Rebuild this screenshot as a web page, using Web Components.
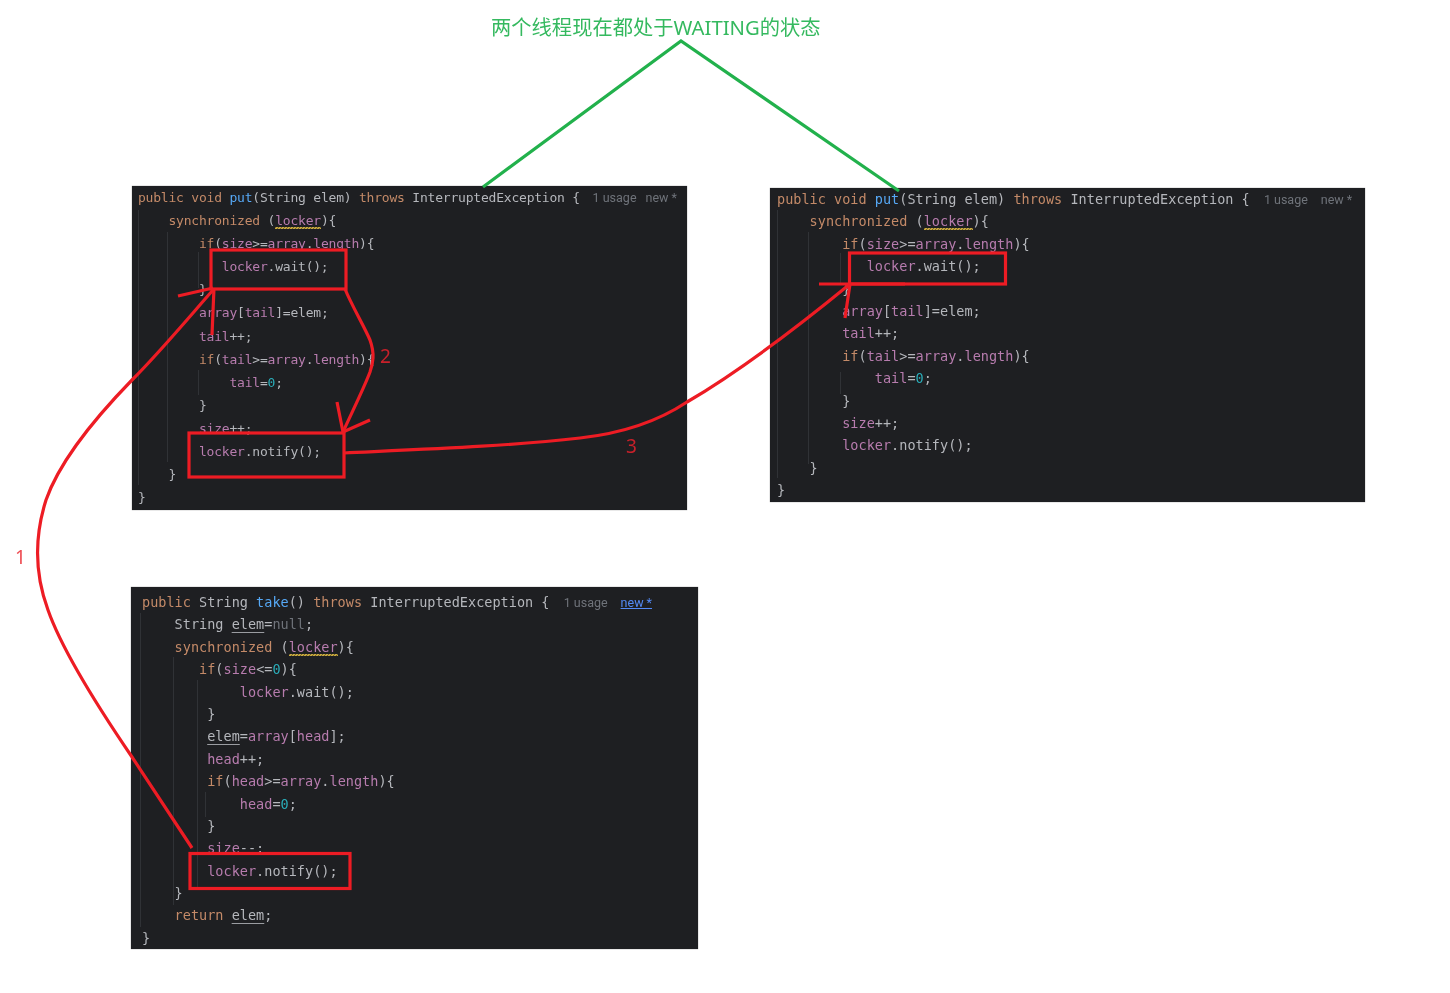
<!doctype html>
<html lang="zh">
<head>
<meta charset="utf-8">
<title>WAITING</title>
<style>
html,body{margin:0;padding:0;background:#fff}
</style>
</head>
<body>
<sketch-board>
  <note-title slot="title">两个线程现在都处于WAITING的状态</note-title>

  <code-panel slot="a" cw="7.62" lh="23.1" fs="13" pad="0 0 0 6" style="width:555px;height:324px"
    guides="6,24,299;35,46,276;66,66,102;66,184,209">
    <code-line><span class="k">public void</span> <span class="f">put</span>(String elem) <span class="k">throws</span> InterruptedException { <span class="h" style="margin-left:5px">1 usage</span><span class="h" style="margin-left:9px">new *</span></code-line>
    <code-line i="4"><span class="k">synchronized</span> (<span class="w">locker</span>){</code-line>
    <code-line i="8"><span class="k">if</span>(<span class="p">size</span>&gt;=<span class="p">array</span>.<span class="p">length</span>){</code-line>
    <code-line i="11"><span class="p">locker</span>.wait();</code-line>
    <code-line i="8">}</code-line>
    <code-line i="8"><span class="p">array</span>[<span class="p">tail</span>]=elem;</code-line>
    <code-line i="8"><span class="p">tail</span>++;</code-line>
    <code-line i="8"><span class="k">if</span>(<span class="p">tail</span>&gt;=<span class="p">array</span>.<span class="p">length</span>){</code-line>
    <code-line i="12"><span class="p">tail</span>=<span class="n">0</span>;</code-line>
    <code-line i="8">}</code-line>
    <code-line i="8"><span class="p">size</span>++;</code-line>
    <code-line i="8"><span class="p">locker</span>.notify();</code-line>
    <code-line i="4">}</code-line>
    <code-line>}</code-line>
  </code-panel>

  <code-panel slot="b" cw="8.15" lh="22.4" fs="13.5" pad="0 0 0 7" style="width:595px;height:314px"
    guides="7,22,290;38,44,276;70,65,95;70,184,206">
    <code-line><span class="k">public void</span> <span class="f">put</span>(String elem) <span class="k">throws</span> InterruptedException { <span class="h" style="margin-left:6px">1 usage</span><span class="h" style="margin-left:13px">new *</span></code-line>
    <code-line i="4"><span class="k">synchronized</span> (<span class="w">locker</span>){</code-line>
    <code-line i="8"><span class="k">if</span>(<span class="p">size</span>&gt;=<span class="p">array</span>.<span class="p">length</span>){</code-line>
    <code-line i="11"><span class="p">locker</span>.wait();</code-line>
    <code-line i="8">}</code-line>
    <code-line i="8"><span class="p">array</span>[<span class="p">tail</span>]=elem;</code-line>
    <code-line i="8"><span class="p">tail</span>++;</code-line>
    <code-line i="8"><span class="k">if</span>(<span class="p">tail</span>&gt;=<span class="p">array</span>.<span class="p">length</span>){</code-line>
    <code-line i="12"><span class="p">tail</span>=<span class="n">0</span>;</code-line>
    <code-line i="8">}</code-line>
    <code-line i="8"><span class="p">size</span>++;</code-line>
    <code-line i="8"><span class="p">locker</span>.notify();</code-line>
    <code-line i="4">}</code-line>
    <code-line>}</code-line>
  </code-panel>

  <code-panel slot="c" cw="8.15" lh="22.4" fs="13.5" pad="4 0 0 11" style="width:567px;height:362px"
    guides="9,26,340;42,70,318;66,93,300;74,205,230">
    <code-line><span class="k">public</span> String <span class="f">take</span>() <span class="k">throws</span> InterruptedException { <span class="h" style="margin-left:6px">1 usage</span><span class="h l" style="margin-left:13px">new *</span></code-line>
    <code-line i="4">String <span class="u">elem</span>=<span class="d">null</span>;</code-line>
    <code-line i="4"><span class="k">synchronized</span> (<span class="w">locker</span>){</code-line>
    <code-line i="7"><span class="k">if</span>(<span class="p">size</span>&lt;=<span class="n">0</span>){</code-line>
    <code-line i="12"><span class="p">locker</span>.wait();</code-line>
    <code-line i="8">}</code-line>
    <code-line i="8"><span class="u">elem</span>=<span class="p">array</span>[<span class="p">head</span>];</code-line>
    <code-line i="8"><span class="p">head</span>++;</code-line>
    <code-line i="8"><span class="k">if</span>(<span class="p">head</span>&gt;=<span class="p">array</span>.<span class="p">length</span>){</code-line>
    <code-line i="12"><span class="p">head</span>=<span class="n">0</span>;</code-line>
    <code-line i="8">}</code-line>
    <code-line i="8"><span class="p">size</span>--;</code-line>
    <code-line i="8"><span class="p">locker</span>.notify();</code-line>
    <code-line i="4">}</code-line>
    <code-line i="4"><span class="k">return</span> <span class="u">elem</span>;</code-line>
    <code-line>}</code-line>
  </code-panel>

  <ink-layer slot="ink"></ink-layer>
</sketch-board>

<script>
customElements.define("sketch-board", class extends HTMLElement {
    connectedCallback() {
        this.attachShadow({mode: "open"}).innerHTML = `<style>
            :host{display:block;position:relative;width:1450px;height:993px;overflow:hidden;background:#fff}
            .page{display:flex;flex-direction:column;padding-top:15px;box-sizing:border-box;height:100%}
            .top{padding-left:491px;height:171px}
            .row{display:flex;align-items:flex-start;padding-left:132px}
            .gap{width:83px;flex:none}
            .b{margin-top:2px}
            .low{margin-top:77px;padding-left:131px}
        </style>
        <div class="page">
            <div class="top"><slot name="title"></slot></div>
            <div class="row"><slot name="a"></slot><div class="gap"></div><div class="b"><slot name="b"></slot></div></div>
            <div class="row low"><slot name="c"></slot></div>
        </div>
        <slot name="ink"></slot>`;
    }
});

customElements.define("note-title", class extends HTMLElement {
    connectedCallback() {
        this.attachShadow({mode: "open"}).innerHTML = `<style>
            :host{display:block;font:20.3px/25px "Noto Sans","Noto Sans CJK SC",sans-serif;color:#35b95f;white-space:nowrap;filter:blur(.35px)}
        </style><slot></slot>`;
    }
});

customElements.define("code-panel", class extends HTMLElement {
    connectedCallback() {
        let cw = +this.getAttribute("cw"), fs = +this.getAttribute("fs");
        let pad = this.getAttribute("pad").split(" ").map(v => v + "px").join(" ");
        // indent guides are faint rules lying over the code block
        let guides = (this.getAttribute("guides") || "").split(";").map(g => {
            let [x, a, b] = g.split(",");
            return `<i style="left:${x}px;top:${a}px;height:${b - a}px"></i>`;
        }).join("");
        this.attachShadow({mode: "open"}).innerHTML = `<style>
            :host{display:block;flex:none;position:relative;box-sizing:border-box;background:#1e1f22;
                box-shadow:0 0 1px #77787a;
                --cw:${cw}px;--lh:${this.getAttribute("lh")}px;
                font:${fs}px "DejaVu Sans Mono","Liberation Mono",monospace;
                letter-spacing:${(cw - fs * 0.60205).toFixed(3)}px;color:#b5b7bc}
            .code{display:flex;flex-direction:column;padding:${pad}}
            i{position:absolute;width:1px;background:#303236}
        </style>${guides}<div class="code"><slot></slot></div>`;
    }
});

customElements.define("code-line", class extends HTMLElement {
    connectedCallback() {
        let n = ~~this.getAttribute("i");
        this.attachShadow({mode: "open"}).innerHTML = `<style>
            :host{display:block;height:var(--lh);line-height:var(--lh);white-space:pre;
                padding-left:calc(var(--cw) * ${n});filter:blur(.45px)}
            ::slotted(.k){color:#c48a68}
            ::slotted(.f){color:#56a8f5}
            ::slotted(.p){color:#b77cae}
            ::slotted(.n){color:#2aacb8}
            ::slotted(.d){color:#6f737a}
            ::slotted(.u){text-decoration:underline;text-decoration-color:#9a9ca1;text-underline-offset:3px}
            ::slotted(.w){color:#b77cae;padding-bottom:1px;
                background:linear-gradient(135deg,transparent 35%,#c9a83c 35% 65%,transparent 65%) 0 100%/3px 2px repeat-x,
                    linear-gradient(45deg,transparent 35%,#c9a83c 35% 65%,transparent 65%) 1.5px 100%/3px 2px repeat-x}
            ::slotted(.h){font:12.5px Roboto,"Liberation Sans",sans-serif;letter-spacing:0;color:#6f737a;display:inline-block}
            ::slotted(.l){color:#548af7;text-decoration:underline}
        </style><slot></slot>`;
    }
});

customElements.define("ink-layer", class extends HTMLElement {
    connectedCallback() {
        this.attachShadow({mode: "open"}).innerHTML = `<style>
            :host{position:absolute;inset:0;display:block;pointer-events:none}
            svg{display:block;filter:blur(.3px)}
            .r{fill:none;stroke:#ed1c24;stroke-width:3.2}
            .g{fill:none;stroke:#22b14c;stroke-width:3.2}
            text{font:19px "Noto Sans","Liberation Sans",sans-serif}
        </style>
        <svg width="1450" height="993" viewBox="0 0 1450 993">
            <path class="g" d="M483 187L681 41L899 191"/>
            <rect class="r" x="211" y="250" width="135" height="39"/>
            <rect class="r" x="189" y="433" width="155" height="44"/>
            <rect class="r" x="849.500" y="253" width="156" height="31"/>
            <rect class="r" x="190" y="853.500" width="160" height="35"/>
            <path class="r" d="M345 289C352 306 364 326 370 340C375 354 373 363 370 372C364 388 352 412 343 432"/>
            <path class="r" d="M337 402L343 432L370 420"/>
            <path class="r" d="M344 453C430 449 510 446 580 438C625 433 660 420 687 402C740 371 800 325 850 284"/>
            <path class="r" d="M819 284H905M850 284L845 318"/>
            <path class="r" d="M213 290C190 316 160 352 132 380C95 418 60 460 46 500C34 538 35 575 48 610C62 650 100 710 132 757C155 792 175 822 192 848"/>
            <path class="r" d="M178 296L213 288M214 288L212 335"/>
            <text x="15" y="564" fill="#ee4c52">1</text>
            <text x="380" y="363" fill="#c8202a">2</text>
            <text x="626" y="453" fill="#c8202a">3</text>
        </svg>`;
    }
});
</script>
</body>
</html>
